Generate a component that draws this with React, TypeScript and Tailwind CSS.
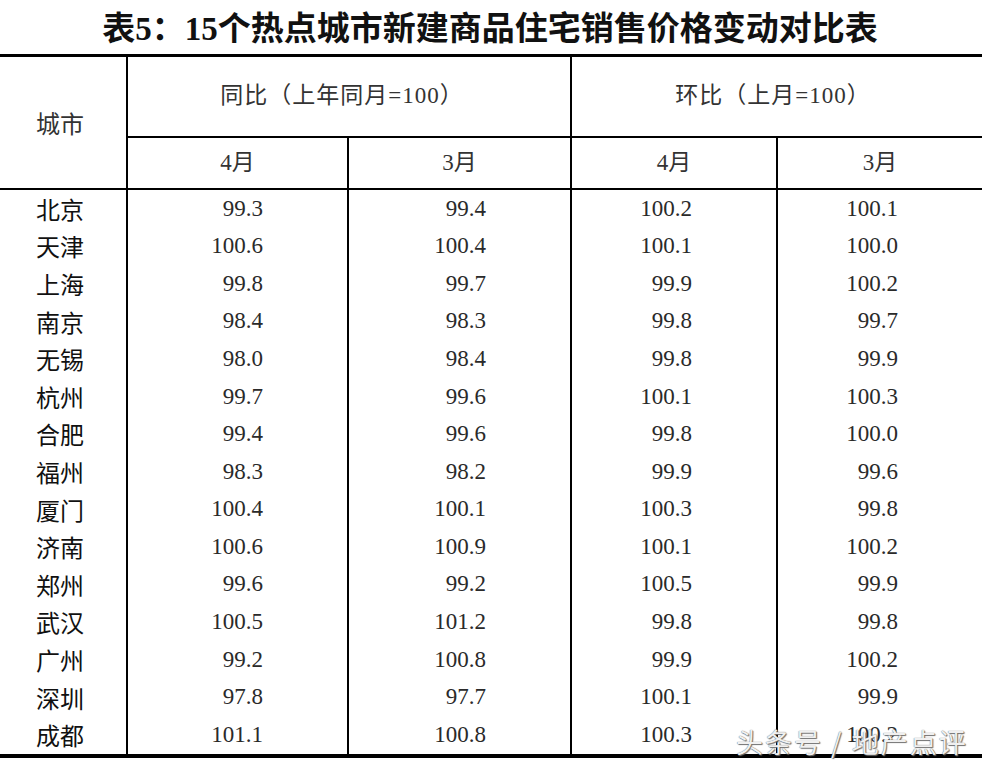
import React from "react";

const rows: [string, string, string, string, string][] = [
  ["北京", "99.3", "99.4", "100.2", "100.1"],
  ["天津", "100.6", "100.4", "100.1", "100.0"],
  ["上海", "99.8", "99.7", "99.9", "100.2"],
  ["南京", "98.4", "98.3", "99.8", "99.7"],
  ["无锡", "98.0", "98.4", "99.8", "99.9"],
  ["杭州", "99.7", "99.6", "100.1", "100.3"],
  ["合肥", "99.4", "99.6", "99.8", "100.0"],
  ["福州", "98.3", "98.2", "99.9", "99.6"],
  ["厦门", "100.4", "100.1", "100.3", "99.8"],
  ["济南", "100.6", "100.9", "100.1", "100.2"],
  ["郑州", "99.6", "99.2", "100.5", "99.9"],
  ["武汉", "100.5", "101.2", "99.8", "99.8"],
  ["广州", "99.2", "100.8", "99.9", "100.2"],
  ["深圳", "97.8", "97.7", "100.1", "99.9"],
  ["成都", "101.1", "100.8", "100.3", "100.2"],
];

const cols = "grid grid-cols-[126px_221px_223px_206px_206px]";

export default function App() {
  return (
    <div className="relative w-[986px] h-[770px] overflow-hidden bg-white text-[#222] font-['Liberation_Serif','Noto_Sans_CJK_SC',serif]">
      {/* Title */}
      <h1 className="h-[54px] pt-[5px] pr-[6px] flex items-center justify-center text-[33px] font-bold text-[#111] leading-none">
        表5：15个热点城市新建商品住宅销售价格变动对比表
      </h1>

      {/* Table */}
      <div className="w-[982px] border-t-[3px] border-b-4 border-black">
        {/* Header */}
        <div className={`${cols} grid-rows-[81px_50px] border-b-2 border-black text-[23px] text-[#333]`}>
          <div className="row-span-2 flex items-center justify-center pr-[6px] font-['Noto_Sans_CJK_SC',sans-serif] text-[24px]">
            城市
          </div>
          <div className="col-span-2 border-l-2 border-black border-b-2 flex items-center justify-center pr-[14px] tracking-[1px]">
            同比（上年同月=100）
          </div>
          <div className="col-span-2 border-l-2 border-black border-b-2 flex items-center justify-center pr-[8px] tracking-[1px]">
            环比（上月=100）
          </div>
          <div className="border-l-2 border-black flex items-center justify-center">4月</div>
          <div className="border-l-2 border-black flex items-center justify-center">3月</div>
          <div className="border-l-2 border-black flex items-center justify-center">4月</div>
          <div className="border-l-2 border-black flex items-center justify-center">3月</div>
        </div>

        {/* Body */}
        {rows.map(([city, ...vals]) => (
          <div key={city} className={`${cols} h-[37.6px] text-[23px]`}>
            <div className="flex items-center justify-center pr-[6px] font-['Noto_Sans_CJK_SC',sans-serif] text-[24px] text-[#111]">
              {city}
            </div>
            {vals.map((v, i) => (
              <div key={i} className="border-l-2 border-black flex items-center justify-end pr-[84px] text-[#2a2a2a]">
                {v}
              </div>
            ))}
          </div>
        ))}
      </div>

      {/* Watermark */}
      <div className="absolute left-[736px] top-[728px] text-[27px] tracking-[2px] leading-none font-['Noto_Sans_CJK_SC',sans-serif] text-[#f0f0f0] [text-shadow:0_0_1px_#444,1px_1px_1px_#777]">
        头条号 / 地产点评
      </div>
    </div>
  );
}
